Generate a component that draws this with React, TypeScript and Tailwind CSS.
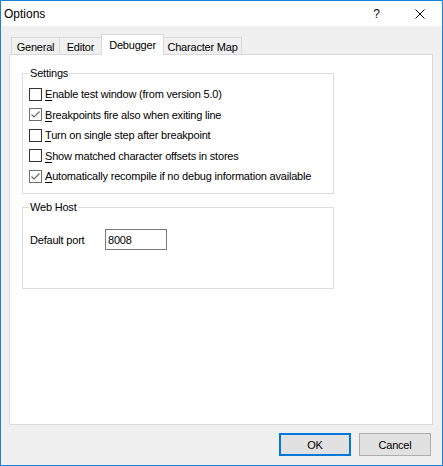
import React from 'react';

const font = { fontFamily: '"Liberation Sans", Arial, sans-serif' };

function CheckBox({ checked }: { checked: boolean }) {
  return (
    <div
      className={`w-[13px] h-[13px] border bg-white flex items-center justify-center shrink-0 ${
        checked ? 'border-[#6f6f6f]' : 'border-[#333333]'
      }`}
    >
      {checked && (
        <svg width="11" height="11" viewBox="0 0 11 11">
          <path d="M1.5 5.5 L4 8 L9.5 2.5" fill="none" stroke="#6a6a6a" strokeWidth="1.2" />
        </svg>
      )}
    </div>
  );
}

function GroupBox({ label, className, children }: { label: string; className: string; children: React.ReactNode }) {
  return (
    <div className={`relative border border-[#dcdcdc] ${className}`}>
      <span className="absolute -top-[8px] left-[6px] bg-white px-[1px] leading-[14px] text-black">{label}</span>
      {children}
    </div>
  );
}

export default function App() {
  const options = [
    { key: 'E', rest: 'nable test window (from version 5.0)', checked: false },
    { key: 'B', rest: 'reakpoints fire also when exiting line', checked: true },
    { key: 'T', rest: 'urn on single step after breakpoint', checked: false },
    { key: 'S', rest: 'how matched character offsets in stores', checked: false },
    { key: 'A', rest: 'utomatically recompile if no debug information available', checked: true },
  ];

  const tabs = [
    { name: 'General', w: 'w-[49px]' },
    { name: 'Editor', w: 'w-[43px]' },
    { name: 'Debugger', w: 'w-[63px]' },
    { name: 'Character Map', w: 'w-[79px]' },
  ];

  return (
    <div
      className="w-[443px] h-[466px] border border-[#1883d7] bg-[#f0f0f0] flex flex-col text-[11px] tracking-[-0.2px] text-black"
      style={font}
    >
      {/* title bar */}
      <div className="h-[25px] bg-white flex items-center shrink-0">
        <span className="pl-[3px] text-[12px] tracking-normal">Options</span>
        <span className="ml-auto mr-[35px] text-[12px] tracking-normal">?</span>
        <svg width="10" height="10" viewBox="0 0 10 10" className="mr-[17px]">
          <path d="M0.5 0.5 L9.5 9.5 M9.5 0.5 L0.5 9.5" stroke="#000" strokeWidth="1" />
        </svg>
      </div>

      <div className="px-[8px] pt-[8px] flex flex-col">
        {/* tabs */}
        <div className="flex items-end pl-[2px] h-[20px]">
          {tabs.map((t, i) => {
            const active = t.name === 'Debugger';
            return active ? (
              <div
                key={t.name}
                className={`relative z-10 -ml-px ${t.w} h-[21px] -mb-px bg-white border border-b-0 border-[#d9d9d9] pt-[3px] leading-[14px] text-center`}
              >
                {t.name}
              </div>
            ) : (
              <div
                key={t.name}
                className={`${t.w} h-[17px] bg-[#f0f0f0] border border-b-0 border-[#d9d9d9] pt-[2px] leading-[14px] text-center ${
                  i > 0 ? '-ml-px' : ''
                }`}
              >
                {t.name}
              </div>
            );
          })}
        </div>

        {/* panel */}
        <div className="h-[371px] w-[424px] border border-[#d9d9d9] bg-white pl-[12px] pt-[18px] flex flex-col">
          <GroupBox label="Settings" className="w-[312px] h-[121px] pt-[10px] pl-[6px]">
            {options.map((o) => (
              <div key={o.key} className="h-[20.5px] flex items-center gap-[3px]">
                <CheckBox checked={o.checked} />
                <span className="leading-[14px]">
                  <span className="underline underline-offset-[2px]">{o.key}</span>
                  {o.rest}
                </span>
              </div>
            ))}
          </GroupBox>

          <GroupBox label="Web Host" className="mt-[13px] w-[312px] h-[82px] pt-[21px] pl-[7px]">
            <div className="flex items-center">
              <span className="w-[75px] leading-[14px]">Default port</span>
              <div className="w-[62px] h-[21px] border border-[#7a7a7a] bg-white flex items-center pl-[2px] leading-[14px]">
                8008
              </div>
            </div>
          </GroupBox>
        </div>

        {/* buttons */}
        <div className="flex justify-end gap-[8px] mt-[8px] pr-[3px]">
          <button className="w-[72px] h-[23px] border-2 border-[#0078d7] bg-[#e1e1e1] leading-[14px]">OK</button>
          <button className="w-[72px] h-[23px] border border-[#adadad] bg-[#e1e1e1] leading-[14px]">Cancel</button>
        </div>
      </div>
    </div>
  );
}
